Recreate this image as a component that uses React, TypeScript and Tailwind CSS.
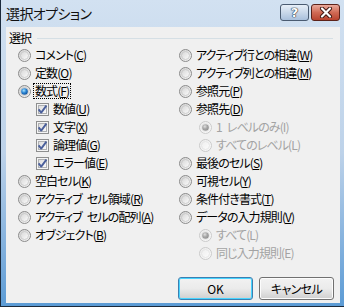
import { useId } from 'react';

type Item = {
  label: string;
  key: string;
  kind?: 'radio' | 'check';
  checked?: boolean;
  disabled?: boolean;
  indent?: boolean;
  focus?: boolean;
};

const leftItems: Item[] = [
  { label: 'コメント', key: 'C' },
  { label: '定数', key: 'O' },
  { label: '数式', key: 'F', checked: true, focus: true },
  { label: '数値', key: 'U', kind: 'check', checked: true, indent: true },
  { label: '文字', key: 'X', kind: 'check', checked: true, indent: true },
  { label: '論理値', key: 'G', kind: 'check', checked: true, indent: true },
  { label: 'エラー値', key: 'E', kind: 'check', checked: true, indent: true },
  { label: '空白セル', key: 'K' },
  { label: 'アクティブ\u2002セル領域', key: 'R' },
  { label: 'アクティブ\u2002セルの配列', key: 'A' },
  { label: 'オブジェクト', key: 'B' },
];

const rightItems: Item[] = [
  { label: 'アクティブ行との相違', key: 'W' },
  { label: 'アクティブ列との相違', key: 'M' },
  { label: '参照元', key: 'P' },
  { label: '参照先', key: 'D' },
  { label: '1\u2002レベルのみ', key: 'I', checked: true, disabled: true, indent: true },
  { label: 'すべてのレベル', key: 'L', disabled: true, indent: true },
  { label: '最後のセル', key: 'S' },
  { label: '可視セル', key: 'Y' },
  { label: '条件付き書式', key: 'T' },
  { label: 'データの入力規則', key: 'V' },
  { label: 'すべて', key: 'L', checked: true, disabled: true, indent: true },
  { label: '同じ入力規則', key: 'E', disabled: true, indent: true },
];

const useSvgId = () => useId().replace(/[^a-zA-Z0-9]/g, '');

const Radio = ({ checked, disabled }: { checked?: boolean; disabled?: boolean }) => {
  const id = useSvgId();
  return (
    <svg width="13" height="13" viewBox="0 0 13 13" className="shrink-0">
      <defs>
        <linearGradient id={`${id}o`} x1="0" y1="0" x2="1" y2="1">
          <stop offset="0" stopColor={disabled ? '#ececec' : '#d2d2d2'} />
          <stop offset="1" stopColor={disabled ? '#fafafa' : '#f7f7f7'} />
        </linearGradient>
        <linearGradient id={`${id}i`} x1="0" y1="0" x2="1" y2="1">
          <stop offset="0" stopColor={disabled ? '#eeeeee' : '#d6d6d6'} />
          <stop offset="1" stopColor="#fcfcfc" />
        </linearGradient>
        <radialGradient id={`${id}d`} cx="0.4" cy="0.35" r="0.7">
          <stop offset="0" stopColor={disabled ? '#e0e0e0' : '#a8e4ff'} />
          <stop offset="0.5" stopColor={disabled ? '#a8a8a8' : '#2c86d4'} />
          <stop offset="1" stopColor={disabled ? '#8c8c8c' : '#0b4a92'} />
        </radialGradient>
      </defs>
      <circle cx="6.5" cy="6.5" r="6" fill={`url(#${id}o)`} stroke={disabled ? '#cacaca' : '#8c8c8c'} />
      <circle cx="6.5" cy="6.5" r="4" fill={`url(#${id}i)`} stroke={disabled ? '#e2e2e2' : '#c4c4c4'} strokeWidth="0.8" />
      {checked && <circle cx="6.5" cy="6.5" r="3.3" fill={`url(#${id}d)`} />}
    </svg>
  );
};

const Check = ({ checked }: { checked?: boolean }) => {
  const id = useSvgId();
  return (
    <svg width="13" height="13" viewBox="0 0 13 13" className="shrink-0">
      <defs>
        <linearGradient id={`${id}b`} x1="0" y1="0" x2="1" y2="1">
          <stop offset="0" stopColor="#dcdcdc" />
          <stop offset="1" stopColor="#fbfbfb" />
        </linearGradient>
      </defs>
      <rect x="0.5" y="0.5" width="12" height="12" fill="#f4f4f4" stroke="#8e8f8f" />
      <rect x="2.5" y="2.5" width="8" height="8" fill={`url(#${id}b)`} stroke="#aeb0b3" />
      {checked && (
        <path d="M2.6 6.4 L5.2 9.6 L10.4 2.6" fill="none" stroke="#4a5f9b" strokeWidth="1.9" strokeLinejoin="round" />
      )}
    </svg>
  );
};

const Row = ({ item, indentClass }: { item: Item; indentClass: string }) => (
  <div className={`h-[18px] flex items-center gap-[2px] ${item.indent ? indentClass : ''}`}>
    {item.kind === 'check' ? <Check checked={item.checked} /> : <Radio checked={item.checked} disabled={item.disabled} />}
    <span
      className={`px-[1px] border leading-[14px] whitespace-nowrap tracking-[-0.9px] ${item.focus ? 'border-dotted border-black' : 'border-transparent'} ${item.disabled ? 'text-[#a3a3a3]' : 'text-black'}`}
    >
      {item.label}(<span className={item.disabled ? '' : 'underline underline-offset-1'}>{item.key}</span>)
    </span>
  </div>
);

export default function App() {
  return (
    <div className="w-[344px] h-[307px] flex flex-col overflow-hidden border-l border-b border-[#1b2a3c] bg-gradient-to-b from-[#d2e1f1] via-[#bdd2e9] to-[#5b9bd5] font-['Noto_Sans_CJK_JP',sans-serif] [font-feature-settings:'palt'] text-[12px] select-none">
      {/* Title bar */}
      <div className="h-[27px] flex items-start shrink-0 pl-[5px] pr-[4px]">
        <span className="mt-[4px] text-[14px] leading-[18px] tracking-[-0.6px] text-[#111]">選択オプション</span>
        <div className="ml-auto mt-[4px] flex gap-[2px]">
          <div className="w-[29px] h-[17px] rounded-[3px] border border-[#4a5b71] bg-gradient-to-b from-[#e7eff8] via-[#c9d8ea] to-[#a9c0dc] flex items-center justify-center">
            <span className="text-[13px] leading-none font-bold text-white [text-shadow:0_0_1px_#1c2a3d,0_0_1px_#1c2a3d,0_0_1px_#1c2a3d] font-['DejaVu_Sans',sans-serif]">?</span>
          </div>
          <div className="w-[29px] h-[17px] rounded-[3px] border border-[#5c2219] bg-gradient-to-b from-[#e9a99b] via-[#d06a55] to-[#b8432f] flex items-center justify-center">
            <svg width="14" height="11" viewBox="0 0 14 11">
              <path d="M3 1.5 L11 9.5 M11 1.5 L3 9.5" stroke="#3a1510" strokeWidth="4" strokeLinecap="round" />
              <path d="M3 1.5 L11 9.5 M11 1.5 L3 9.5" stroke="#ffffff" strokeWidth="2.2" strokeLinecap="round" />
            </svg>
          </div>
        </div>
      </div>

      {/* Client area */}
      <div className="flex-1 ml-[5px] mr-[4px] mb-[3px] bg-[#f0f0f0] flex flex-col">
        <div className="mt-[3px] h-[16px] flex items-center pl-[3px] pr-[7px]">
          <span className="leading-[14px] tracking-[-0.9px] text-black">選択</span>
          <div className="flex-1 ml-[6px] border-t border-[#d5dfe5]" />
        </div>

        <div className="flex">
          <div className="w-[173px] pl-[12px] flex flex-col">
            {leftItems.map((item, i) => (
              <Row key={i} item={item} indentClass="pl-[18px]" />
            ))}
          </div>
          <div className="flex flex-col">
            {rightItems.map((item, i) => (
              <Row key={i} item={item} indentClass="pl-[20px]" />
            ))}
          </div>
        </div>

        <div className="flex justify-end gap-[6px] pr-[6px] pt-[15px]">
          <button className="w-[75px] h-[23px] rounded-[3px] border border-[#3c7fb1] shadow-[inset_0_0_0_1px_#48d4ff] bg-gradient-to-b from-[#f2f2f2] via-[#ebebeb] to-[#cfcfcf] text-black text-[12px] leading-none">
            OK
          </button>
          <button className="w-[75px] h-[23px] rounded-[3px] border border-[#707070] shadow-[inset_0_0_0_1px_#fcfcfc] bg-gradient-to-b from-[#f2f2f2] via-[#ebebeb] to-[#cfcfcf] text-black text-[12px] leading-none tracking-[-0.6px]">
            キャンセル
          </button>
        </div>
      </div>
    </div>
  );
}
